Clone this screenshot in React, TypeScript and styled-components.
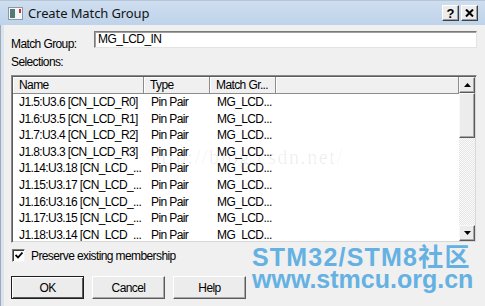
import React from "react";
import styled, { createGlobalStyle } from "styled-components";

const GlobalStyle = createGlobalStyle`
  html, body { margin: 0; padding: 0; background: #f0f0f0; }
  body { width: 485px; height: 306px; overflow: hidden; }
`;

const UI = `"Liberation Sans", Arial, sans-serif`;

const Window = styled.div`
  position: relative;
  width: 485px;
  height: 306px;
  display: flex;
  flex-direction: column;
  background: #f0f0f0;
  font-family: ${UI};
  font-size: 12px;
  letter-spacing: -0.6px;
  color: #000;
  overflow: hidden;
`;

const TitleBar = styled.div`
  height: 25px;
  flex: none;
  display: flex;
  align-items: center;
  padding: 0 7px 0 8px;
  background: linear-gradient(#cfdeef, #bed3ea);
  border-top: 1px solid #b4c6da;
  box-sizing: border-box;
  letter-spacing: 0;
`;

const TitleText = styled.div`
  flex: 1;
  margin-left: 5px;
  font-family: "Noto Sans", "Liberation Sans", sans-serif;
  font-size: 13px;
  letter-spacing: -0.1px;
  color: #141414;
  padding-bottom: 1px;
`;

const CaptionButton = styled.div`
  width: 17px;
  height: 16px;
  box-sizing: border-box;
  margin-left: 2px;
  display: flex;
  align-items: center;
  justify-content: center;
  background: #ececec;
  border: 1px solid;
  border-color: #fff #404040 #404040 #fff;
  box-shadow: inset -1px -1px 0 #a0a0a0;
  font-family: "Liberation Sans", Arial, sans-serif;
  font-weight: bold;
  font-size: 13px;
  line-height: 1;
`;

const Body = styled.div`
  flex: 1;
  display: flex;
  flex-direction: column;
  padding: 6px 8px 0 10px;
  border-left: 1px solid #9ca9b8;
  box-shadow: inset 3px 0 0 #dbe4ee;
`;

const FieldRow = styled.div`
  display: flex;
  align-items: flex-end;
  height: 17px;
`;

const FieldLabel = styled.div`
  width: 83px;
  line-height: 13px;
  margin-bottom: -3px;
`;

const TextInput = styled.div`
  flex: 1;
  height: 17px;
  box-sizing: border-box;
  background: #fff;
  border: 1px solid;
  border-color: #7a7a7a #e3e3e3 #e3e3e3 #7a7a7a;
  box-shadow: inset 1px 1px 0 #a0a0a0;
  padding: 0 0 0 3px;
  line-height: 15px;
`;

const SectionLabel = styled.div`
  margin-top: 8px;
  line-height: 13px;
`;

const ListBox = styled.div`
  margin-top: 6px;
  width: 466px;
  height: 168px;
  box-sizing: border-box;
  display: flex;
  border: 1px solid;
  border-color: #8a8a8a #f0f0f0 #f0f0f0 #8a8a8a;
  box-shadow: inset 1px 1px 0 #5c5c5c, inset -1px -1px 0 #d8d8d8;
  padding: 1px;
  background: #fff;
  overflow: hidden;
`;

const ListMain = styled.div`
  flex: 1;
  overflow: hidden;
`;

const Grid = styled.div`
  display: grid;
  grid-template-columns: 131px 66px 66px 1fr;
`;

const HeaderCell = styled.div`
  height: 17px;
  box-sizing: border-box;
  background: #f0f0f0;
  border-right: 1px solid #8c8c8c;
  border-bottom: 1px solid #8c8c8c;
  box-shadow: inset 1px 1px 0 #fff;
  padding: 1px 0 0 6px;
  line-height: 14px;
  white-space: nowrap;
  overflow: hidden;
`;

const Cell = styled.div<{ $first?: boolean }>`
  height: 16.6px;
  line-height: 16.6px;
  padding-left: ${(p) => (p.$first ? 6 : 7)}px;
  white-space: nowrap;
  overflow: hidden;
`;

const ScrollBar = styled.div`
  width: 16px;
  flex: none;
  display: flex;
  flex-direction: column;
  background-color: #f4f4f4;
  background-image: repeating-conic-gradient(#e6e6e6 0 25%, #fafafa 0 50%);
  background-size: 2px 2px;
`;

const ScrollPart = styled.div<{ $h: number }>`
  height: ${(p) => p.$h}px;
  flex: none;
  box-sizing: border-box;
  background: #ececec;
  border: 1px solid;
  border-color: #f8f8f8 #5a5a5a #5a5a5a #f8f8f8;
  box-shadow: inset -1px -1px 0 #a8a8a8;
  display: flex;
  align-items: center;
  justify-content: center;
`;

const Track = styled.div`
  flex: 1;
`;

const Watermark = styled.div`
  position: absolute;
  left: 150px;
  top: 146px;
  font-family: "Liberation Serif", serif;
  font-size: 20px;
  letter-spacing: 1.6px;
  color: rgba(0, 0, 0, 0.07);
  white-space: nowrap;
  pointer-events: none;
`;

const CheckRow = styled.label`
  display: flex;
  align-items: center;
  margin-top: 6px;
  height: 13px;
  gap: 6px;
  padding-left: 1px;
`;

const CheckBox = styled.div`
  width: 13px;
  height: 13px;
  box-sizing: border-box;
  background: #fff;
  border: 1px solid;
  border-color: #7a7a7a #f4f4f4 #f4f4f4 #7a7a7a;
  box-shadow: inset 1px 1px 0 #3c3c3c;
  display: flex;
  align-items: center;
  justify-content: center;
`;

const ButtonRow = styled.div`
  display: flex;
  gap: 8px;
  margin-top: 14px;
`;

const Button = styled.div<{ $default?: boolean }>`
  width: 73px;
  height: 23px;
  box-sizing: border-box;
  display: flex;
  align-items: center;
  justify-content: center;
  background: #ececec;
  border: 1px solid;
  border-color: ${(p) =>
    p.$default ? "#1e1e1e" : "#ffffff #5a5a5a #5a5a5a #ffffff"};
  box-shadow: ${(p) =>
    p.$default
      ? "inset 1px 1px 0 #fff, inset -1px -1px 0 #5a5a5a"
      : "inset -1px -1px 0 #a8a8a8"};
`;

const Brand = styled.div`
  position: absolute;
  left: 252px;
  top: 246px;
  display: flex;
  flex-direction: column;
  font-family: "Liberation Sans", Arial, "Noto Sans CJK SC", sans-serif;
  font-weight: bold;
  color: #64b1e2;
  letter-spacing: 0;
  pointer-events: none;
`;

const BrandLine = styled.div<{ $size: number; $ls?: number }>`
  font-size: ${(p) => p.$size}px;
  line-height: ${(p) => p.$size - 3}px;
  letter-spacing: ${(p) => p.$ls ?? 0}px;
  white-space: nowrap;
`;

const rows = [
  ["J1.5:U3.6 [CN_LCD_R0]", "Pin Pair", "MG_LCD..."],
  ["J1.6:U3.5 [CN_LCD_R1]", "Pin Pair", "MG_LCD..."],
  ["J1.7:U3.4 [CN_LCD_R2]", "Pin Pair", "MG_LCD..."],
  ["J1.8:U3.3 [CN_LCD_R3]", "Pin Pair", "MG_LCD..."],
  ["J1.14:U3.18 [CN_LCD_...", "Pin Pair", "MG_LCD..."],
  ["J1.15:U3.17 [CN_LCD_...", "Pin Pair", "MG_LCD..."],
  ["J1.16:U3.16 [CN_LCD_...", "Pin Pair", "MG_LCD..."],
  ["J1.17:U3.15 [CN_LCD_...", "Pin Pair", "MG_LCD..."],
  ["J1.18:U3.14 [CN_LCD_...", "Pin Pair", "MG_LCD..."],
];

const Arrow = ({ up }: { up?: boolean }) => (
  <svg width="7" height="4" viewBox="0 0 7 4">
    <path d={up ? "M0 4 L3.5 0 L7 4 Z" : "M0 0 L3.5 4 L7 0 Z"} fill="#000" />
  </svg>
);

export default function App() {
  return (
    <Window>
      <GlobalStyle />
      <TitleBar>
        <svg width="15" height="13" viewBox="0 0 15 13">
          <rect x="0.5" y="0.5" width="14" height="12" fill="#f4f6f8" stroke="#8c98a6" />
          <rect x="2" y="2" width="5" height="9" fill="#4e7c72" />
          <rect x="11" y="2" width="2" height="4" fill="#c23a2c" />
        </svg>
        <TitleText>Create Match Group</TitleText>
        <CaptionButton>?</CaptionButton>
        <CaptionButton>
          <svg width="9" height="8" viewBox="0 0 9 8">
            <path d="M1 0.5 L8 7.5 M8 0.5 L1 7.5" stroke="#000" strokeWidth="2" />
          </svg>
        </CaptionButton>
      </TitleBar>
      <Body>
        <FieldRow>
          <FieldLabel>Match Group:</FieldLabel>
          <TextInput>MG_LCD_IN</TextInput>
        </FieldRow>
        <SectionLabel>Selections:</SectionLabel>
        <ListBox>
          <ListMain>
            <Grid>
              <HeaderCell>Name</HeaderCell>
              <HeaderCell>Type</HeaderCell>
              <HeaderCell>Match Gr...</HeaderCell>
              <HeaderCell />
              {rows.map((r) => (
                <React.Fragment key={r[0]}>
                  <Cell $first>{r[0]}</Cell>
                  <Cell>{r[1]}</Cell>
                  <Cell>{r[2]}</Cell>
                  <Cell />
                </React.Fragment>
              ))}
            </Grid>
          </ListMain>
          <ScrollBar>
            <ScrollPart $h={16}>
              <Arrow up />
            </ScrollPart>
            <ScrollPart $h={45} />
            <Track />
            <ScrollPart $h={16}>
              <Arrow />
            </ScrollPart>
          </ScrollBar>
        </ListBox>
        <CheckRow>
          <CheckBox>
            <svg width="8" height="7" viewBox="0 0 8 7">
              <path d="M0.5 3 L3 5.5 L7.5 0.5" stroke="#000" strokeWidth="1.8" fill="none" />
            </svg>
          </CheckBox>
          Preserve existing membership
        </CheckRow>
        <ButtonRow>
          <Button $default>OK</Button>
          <Button>Cancel</Button>
          <Button>Help</Button>
        </ButtonRow>
      </Body>
      <Watermark>http://blog.csdn.net/</Watermark>
      <Brand>
        <BrandLine $size={25} $ls={1.2}>STM32/STM8社区</BrandLine>
        <BrandLine $size={25}>www.stmcu.org.cn</BrandLine>
      </Brand>
    </Window>
  );
}
